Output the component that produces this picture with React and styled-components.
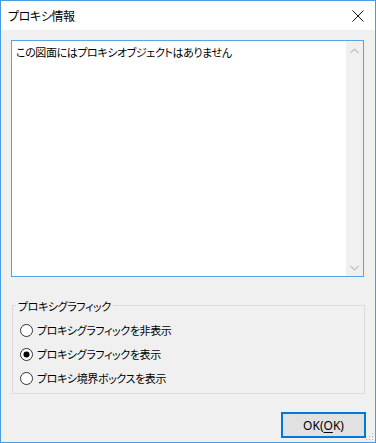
import React from "react";
import styled, { createGlobalStyle } from "styled-components";

const Global = createGlobalStyle`
  html, body { margin: 0; padding: 0; background: #ffffff; }
  body {
    font-family: "Noto Sans CJK JP", "Noto Sans", sans-serif;
    font-size: 11px;
    color: #000;
  }
  * { box-sizing: border-box; }
`;

const Window = styled.div`
  width: 376px;
  height: 443px;
  border: 1px solid #4a9ae2;
  display: flex;
  flex-direction: column;
  background: #f0f0f0;
  font-feature-settings: "palt";
  font-size: 11px;
  letter-spacing: -0.4px;
`;

const TitleBar = styled.div`
  height: 29px;
  background: #ffffff;
  display: flex;
  align-items: center;
  justify-content: space-between;
  padding: 0 10px 0 7px;
  flex-shrink: 0;
`;

const Title = styled.span`
  font-size: 12px;
  letter-spacing: -0.4px;
  line-height: 16px;
  color: #000;
  margin-top: 1px;
`;

const CloseBtn = styled.div`
  width: 14px;
  height: 14px;
  display: flex;
  align-items: center;
  justify-content: center;
  margin-top: 1px;
`;

const Client = styled.div`
  flex: 1;
  display: flex;
  flex-direction: column;
  position: relative;
`;

const TextBox = styled.div`
  margin: 10px 11px 0 10px;
  height: 237px;
  border: 1px solid #5aa2e6;
  background: #ffffff;
  display: flex;
`;

const TextContent = styled.div`
  flex: 1;
  padding: 3px 4px;
  line-height: 16px;
`;

const ScrollBar = styled.div`
  width: 17px;
  background: #f0f0f0;
  display: flex;
  flex-direction: column;
  justify-content: space-between;
  align-items: center;
  padding: 7px 0 5px;
`;

const Group = styled.div`
  margin: 28px 10px 0 11px;
  height: 89px;
  border: 1px solid #dcdcdc;
  position: relative;
  display: flex;
  flex-direction: column;
  padding: 16px 0 0 7px;
  gap: 8px;
`;

const GroupLabel = styled.span`
  position: absolute;
  top: -8px;
  left: 3px;
  padding: 0 2px;
  background: #f0f0f0;
  line-height: 16px;
`;

const RadioRow = styled.label`
  display: flex;
  align-items: center;
  gap: 4px;
  height: 16px;
  line-height: 16px;
`;

const ButtonRow = styled.div`
  display: flex;
  justify-content: flex-end;
  margin: 18px 9px 0 0;
`;

const Button = styled.div`
  width: 85px;
  height: 26px;
  border: 1px solid #0078d7;
  background: #e1e1e1;
  box-shadow: inset 0 0 0 1px #0078d7;
  display: flex;
  align-items: center;
  justify-content: center;
  font-family: "Noto Sans", sans-serif;
  font-size: 12px;
  letter-spacing: 0;
  line-height: 16px;
  padding-top: 1px;
`;

const U = styled.span`
  text-decoration: underline;
  text-underline-offset: 2px;
`;

const Grip = styled.svg`
  position: absolute;
  right: 1px;
  bottom: 1px;
`;

function Radio({ checked }) {
  return (
    <svg width="13" height="13" viewBox="0 0 13 13">
      <circle cx="6.5" cy="6.5" r="6" fill="#fff" stroke="#333" strokeWidth="1" />
      {checked && <circle cx="6.5" cy="6.5" r="3" fill="#000" />}
    </svg>
  );
}

export default function App() {
  return (
    <>
      <Global />
      <Window>
        <TitleBar>
          <Title>プロキシ情報</Title>
          <CloseBtn>
            <svg width="12" height="12" viewBox="0 0 12 12">
              <path d="M0.5 0.5 L11.5 11.5 M11.5 0.5 L0.5 11.5" stroke="#111" strokeWidth="1" fill="none" />
            </svg>
          </CloseBtn>
        </TitleBar>
        <Client>
          <TextBox>
            <TextContent>この図面にはプロキシオブジェクトはありません</TextContent>
            <ScrollBar>
              <svg width="9" height="6" viewBox="0 0 9 6">
                <path d="M0.5 5 L4.5 1 L8.5 5" stroke="#c0c0c0" strokeWidth="1.2" fill="none" />
              </svg>
              <svg width="9" height="6" viewBox="0 0 9 6">
                <path d="M0.5 1 L4.5 5 L8.5 1" stroke="#c0c0c0" strokeWidth="1.2" fill="none" />
              </svg>
            </ScrollBar>
          </TextBox>
          <Group>
            <GroupLabel>プロキシグラフィック</GroupLabel>
            <RadioRow>
              <Radio />
              プロキシグラフィックを非表示
            </RadioRow>
            <RadioRow>
              <Radio checked />
              プロキシグラフィックを表示
            </RadioRow>
            <RadioRow>
              <Radio />
              プロキシ境界ボックスを表示
            </RadioRow>
          </Group>
          <ButtonRow>
            <Button>
              OK(<U>O</U>K)
            </Button>
          </ButtonRow>
          <Grip width="8" height="8" viewBox="0 0 8 8">
            <rect x="6" y="0" width="1" height="1" fill="#b0b0b0" />
            <rect x="3" y="3" width="1" height="1" fill="#b0b0b0" />
            <rect x="6" y="3" width="1" height="1" fill="#b0b0b0" />
            <rect x="0" y="6" width="1" height="1" fill="#b0b0b0" />
            <rect x="3" y="6" width="1" height="1" fill="#b0b0b0" />
            <rect x="6" y="6" width="1" height="1" fill="#b0b0b0" />
          </Grip>
        </Client>
      </Window>
    </>
  );
}
